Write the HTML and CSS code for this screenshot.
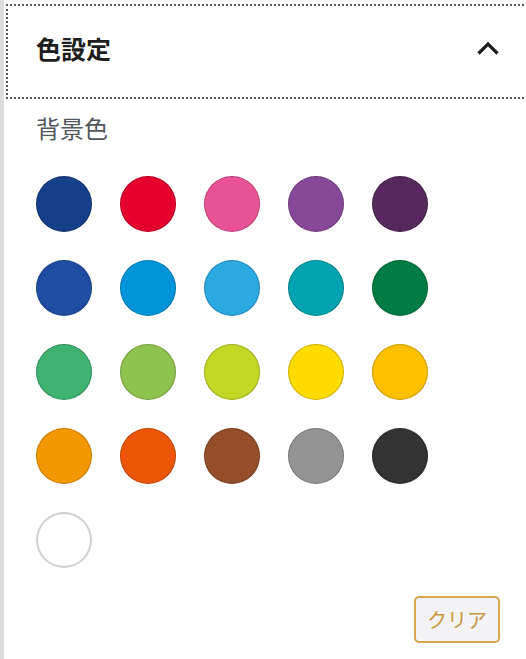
FILE: index.html
```html
<!DOCTYPE html>
<html lang="ja">
  <head>
    <meta charset="utf-8" />
    <title>色設定</title>
    <link rel="stylesheet" href="styles.css">
  </head>
  <body>
    <div class="panel">
      <button class="panel-toggle" type="button">
        <span class="panel-title">色設定</span>
        <svg class="chevron" width="24" height="24" viewBox="0 0 24 24" aria-hidden="true">
          <path d="M2.5 17.5 L12 8 L21.5 17.5" fill="none" stroke="#1e1e1e" stroke-width="3.2"/>
        </svg>
      </button>
      <div class="panel-body">
        <p class="label">背景色</p>
        <div class="swatches">
          <span class="swatch" style="background:#163f89"></span>
          <span class="swatch" style="background:#e5002d"></span>
          <span class="swatch" style="background:#e95295"></span>
          <span class="swatch" style="background:#884898"></span>
          <span class="swatch" style="background:#55295b"></span>
          <span class="swatch" style="background:#1f4ea2"></span>
          <span class="swatch" style="background:#0095d9"></span>
          <span class="swatch" style="background:#2ca9e1"></span>
          <span class="swatch" style="background:#00a3af"></span>
          <span class="swatch" style="background:#007b43"></span>
          <span class="swatch" style="background:#3eb370"></span>
          <span class="swatch" style="background:#8dc24f"></span>
          <span class="swatch" style="background:#c3d825"></span>
          <span class="swatch" style="background:#ffdc00"></span>
          <span class="swatch" style="background:#ffc000"></span>
          <span class="swatch" style="background:#f39800"></span>
          <span class="swatch" style="background:#ea5506"></span>
          <span class="swatch" style="background:#954e2a"></span>
          <span class="swatch" style="background:#949495"></span>
          <span class="swatch" style="background:#333333"></span>
          <span class="swatch swatch-white"></span>
        </div>
        <div class="actions">
          <button class="clear" type="button">クリア</button>
        </div>
      </div>
    </div>
  </body>
</html>
```

FILE: styles.css
```css
* {
  box-sizing: border-box;
}

html,
body {
  margin: 0;
  height: 100%;
  background: #fff;
  font-family: "Noto Sans CJK JP", "Noto Sans", sans-serif;
}

.panel {
  min-height: 100%;
  border-left: 4px solid #dcdcde;
  overflow: hidden;
}

.panel-toggle {
  display: flex;
  align-items: center;
  justify-content: space-between;
  width: calc(100% + 4px);
  height: 95px;
  margin: 4px 0 0 2px;
  padding: 0 30px 8px 28px;
  border: 2px dotted #555;
  background: #fff;
  font: inherit;
  cursor: pointer;
}

.panel-title {
  font-size: 25px;
  font-weight: 700;
  color: #1e1e1e;
}

.chevron {
  display: block;
}

.panel-body {
  padding: 13px 26px 16px 32px;
}

.label {
  margin: 0 0 32px;
  font-size: 24px;
  line-height: 32px;
  color: #50575e;
}

.swatches {
  display: grid;
  grid-template-columns: repeat(5, 56px);
  gap: 28px;
}

.swatch {
  display: block;
  width: 56px;
  height: 56px;
  border-radius: 50%;
  box-shadow: inset 0 0 0 1px rgba(0, 0, 0, 0.2);
}

.swatch-white {
  background: #fff;
  box-shadow: inset 0 0 0 2px #d0d0d0;
}

.actions {
  display: flex;
  justify-content: flex-end;
  margin-top: 28px;
}

.clear {
  height: 47px;
  padding: 0 11px;
  border: 2px solid #d6a64a;
  border-radius: 5px;
  background: #f3f3f5;
  color: #c9963d;
  font: inherit;
  font-size: 20px;
}
```
